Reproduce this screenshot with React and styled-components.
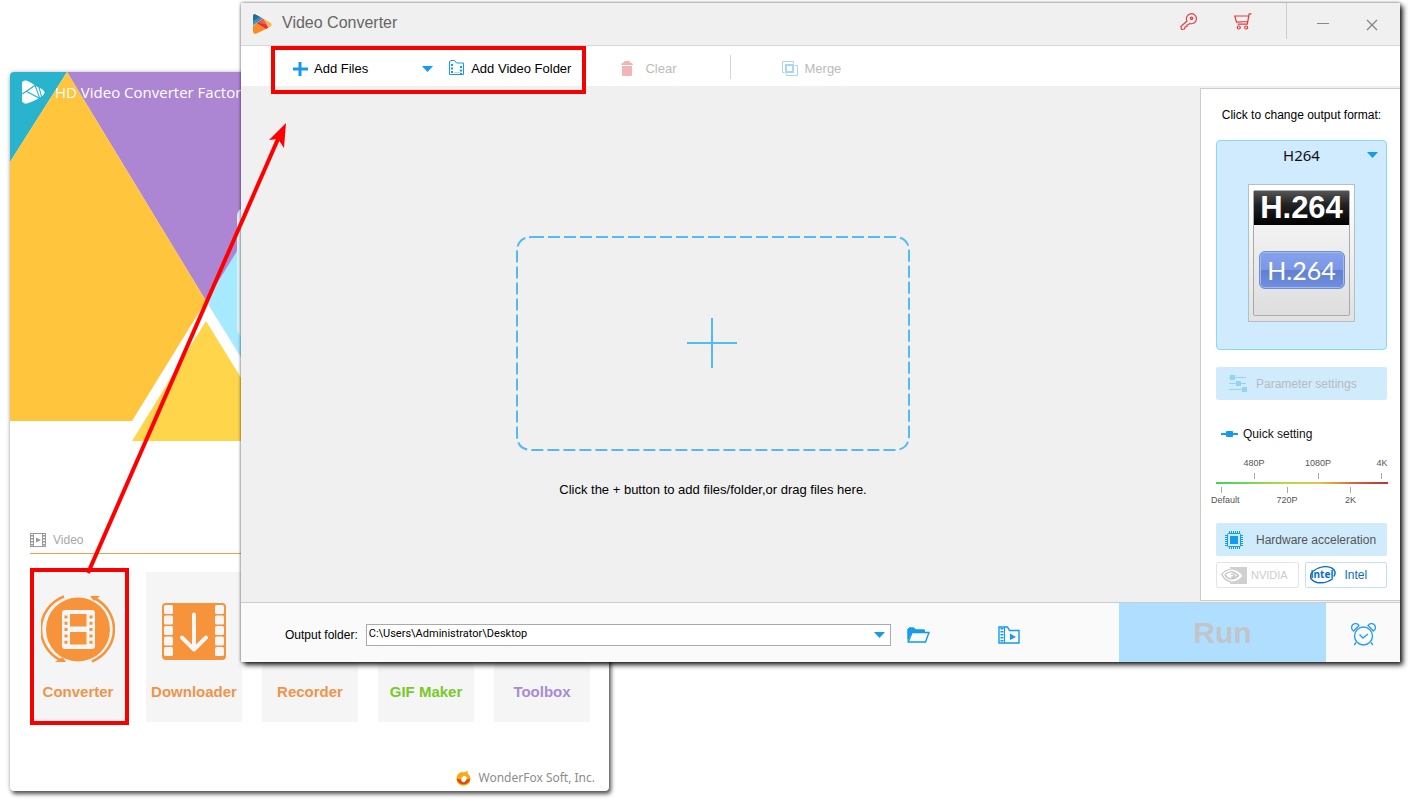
import React, { useState } from "react";
import styled, { createGlobalStyle } from "styled-components";

const GlobalStyle = createGlobalStyle`
  * {
    box-sizing: border-box;
  }

  body {
    margin: 0;
    background: #fff;
    font-family: "Liberation Sans", Arial, sans-serif;
    font-size: 13px;
    color: #111;
  }

  button {
    font-family: inherit;
    border: none;
    background: none;
    padding: 0;
    cursor: pointer;
  }

  svg {
    display: block;
    flex-shrink: 0;
  }
`;

const Desktop = styled.main`
  position: relative;
  min-height: 100vh;
  overflow: hidden;
`;

/* ---------- launcher window ---------- */

const LauncherWindow = styled.section`
  position: absolute;
  left: 10px;
  top: 72px;
  display: flex;
  flex-direction: column;
  width: 599px;
  background: #fff;
  border-radius: 4px;
  box-shadow: 2px 3px 4px rgba(0, 0, 0, 0.65), 0 0 5px rgba(0, 0, 0, 0.2);
`;

const Hero = styled.header`
  position: relative;
  height: 369px;
  overflow: hidden;
  border-radius: 4px 4px 0 0;
`;

const HeroArt = styled.svg`
  position: absolute;
  left: 0;
  top: 0;
`;

const Brand = styled.div`
  position: relative;
  display: flex;
  align-items: center;
  gap: 10px;
  padding: 8px 12px;
  color: #fff;
  font-family: "Open Sans", sans-serif;
  font-size: 15px;
  line-height: 24px;
`;

const LauncherBody = styled.div`
  display: flex;
  flex-direction: column;
  padding: 89px 20px 0;
`;

const SectionTitle = styled.h2`
  display: flex;
  align-items: center;
  gap: 7px;
  margin: 0 0 18px;
  padding-bottom: 3px;
  border-bottom: 1px solid #f0a040;
  color: #a8a8a8;
  font-size: 12px;
  font-weight: normal;
  line-height: 20px;
`;

const Tiles = styled.div`
  display: grid;
  grid-template-columns: repeat(5, 96px);
  gap: 20px;
`;

const Tile = styled.button`
  display: flex;
  flex-direction: column;
  align-items: center;
  justify-content: space-between;
  height: 150px;
  padding: 23px 0 20px;
  background: #f5f5f5;
  color: ${(props) => props.$color};
  font-size: 15px;
  font-weight: bold;
  line-height: 20px;
`;

const LauncherFooter = styled.footer`
  display: flex;
  align-items: center;
  justify-content: flex-end;
  gap: 7px;
  padding: 46px 14px 3px;
  color: #8c8c8c;
  font-family: "Noto Sans", sans-serif;
  font-size: 12px;
  line-height: 20px;
`;

/* ---------- converter window ---------- */

const ConverterWindow = styled.section`
  position: absolute;
  left: 241px;
  right: 28px;
  top: 3px;
  display: flex;
  flex-direction: column;
  background: #f0f0f0;
  box-shadow: 3px 3px 5px rgba(0, 0, 0, 0.85), 0 0 3px rgba(0, 0, 0, 0.55);
`;

const TitleBar = styled.header`
  display: flex;
  align-items: center;
  height: 43px;
  padding-left: 11px;
  border-bottom: 1px solid #d8d8d8;
`;

const Title = styled.h1`
  flex: 1;
  margin: 0 0 2px 10px;
  color: #666;
  font-size: 16px;
  font-weight: normal;
  line-height: 20px;
`;

const TitleActions = styled.div`
  display: flex;
  align-items: center;
  align-self: stretch;
  padding: 0 22px 6px 0;
`;

const TitleButton = styled.button`
  margin-left: ${(props) => props.$before || 0}px;
`;

const CloseButton = styled(TitleButton)`
  padding-top: 8px;
`;

const TitleDivider = styled.span`
  align-self: stretch;
  width: 1px;
  margin: 0 30px 0 34px;
  background: #ccc;
`;

const Toolbar = styled.div`
  display: flex;
  align-items: center;
  height: 40px;
  padding: 5px 0 0 51px;
  background: #fff;
`;

const ToolButton = styled.button`
  display: flex;
  align-items: center;
  gap: ${(props) => props.$gap || 6}px;
  margin-left: ${(props) => props.$before || 0}px;
  color: #000;
  font-size: 13px;
  line-height: 20px;

  &:disabled {
    color: #bbb;
    cursor: default;
  }
`;

const ToolDivider = styled.span`
  width: 1px;
  height: 24px;
  margin: 0 0 4px 53px;
  background: #d4d4d4;
`;

const Workspace = styled.div`
  display: flex;
  min-height: 516px;
`;

const DropArea = styled.div`
  flex: 1;
  display: flex;
  flex-direction: column;
  align-items: center;
  gap: 29px;
  padding: 149px 15px 0 0;
`;

const DropZone = styled.button`
  display: flex;
`;

const DropHint = styled.p`
  margin: 0;
  color: #000;
  font-size: 13px;
  line-height: 20px;
`;

const Sidebar = styled.aside`
  display: flex;
  flex-direction: column;
  width: 200px;
  margin: 2px 0 1px;
  padding: 16px 13px 0 15px;
  background: #fff;
  border: 1px solid #ccc;
  border-right: none;
`;

const SideLabel = styled.p`
  margin: 0 0 15px;
  text-align: center;
  white-space: nowrap;
  font-size: 12px;
  line-height: 20px;
  color: #000;
`;

const FormatButton = styled.button`
  display: flex;
  flex-direction: column;
  align-items: center;
  gap: 18px;
  height: 210px;
  padding: 3px 8px;
  background: #d0ebfe;
  border: 1px solid #86dcec;
  border-radius: 4px;
`;

const FormatName = styled.span`
  display: grid;
  grid-template-columns: 11px 1fr 11px;
  align-items: center;
  width: 100%;
  color: #111;
  font-family: "Noto Sans", sans-serif;
  font-size: 15px;
  line-height: 22px;

  span {
    grid-column: 2;
  }
`;

const FormatCard = styled.span`
  display: flex;
  width: 107px;
  height: 138px;
  padding: 5px 4px;
  border: 1px solid #b8bcc4;
  background: linear-gradient(#fff, #e2e2e2);
`;

const FormatSheet = styled.span`
  flex: 1;
  display: flex;
  flex-direction: column;
  align-items: center;
  gap: 26px;
  border: 1px solid #aaa;
  border-radius: 2px;
  background: linear-gradient(#fafafa, #dedede);
`;

const FormatBanner = styled.span`
  align-self: stretch;
  height: 34px;
  background: linear-gradient(#555, #222 40%, #000);
  color: #fff;
  text-align: center;
  font-size: 31px;
  font-weight: bold;
  line-height: 34px;
`;

const FormatBadge = styled.span`
  width: 86px;
  height: 38px;
  border: 1px solid #6d8fd8;
  border-radius: 6px;
  background: linear-gradient(#86a2ea, #7a97e6 50%, #6280cf 51%, #6f8fdf);
  box-shadow: inset 0 0 0 1px #a3b9f2;
  color: #fff;
  text-align: center;
  font-family: Lato, sans-serif;
  font-size: 25px;
  line-height: 37px;
`;

const WideButton = styled.button`
  display: flex;
  align-items: center;
  gap: ${(props) => props.$gap}px;
  height: 33px;
  margin-top: ${(props) => props.$before}px;
  padding: 0 ${(props) => props.$inset}px;
  background: #d0ebfc;
  border-radius: 2px;
  color: #555;
  font-size: 12px;
  white-space: nowrap;

  &:disabled {
    color: #b4bcc2;
    cursor: default;
  }
`;

const QuickLabel = styled.label`
  display: flex;
  align-items: center;
  gap: 5px;
  margin: 24px 0 13px 5px;
  color: #111;
  font-size: 12px;
  line-height: 20px;
`;

const Scale = styled.div`
  margin: 0 -11px 0 -10px;
`;

const ScaleRow = styled.div`
  display: grid;
  grid-template-columns: repeat(6, 1fr);
  justify-items: center;
  color: #555;
  font-size: 9px;
  line-height: 12px;
  white-space: nowrap;
`;

const ScaleMark = styled.span`
  display: flex;
  flex-direction: column;
  grid-column: ${(props) => props.$column};
  align-items: center;
  gap: 4px;

  &::after {
    content: "";
    width: 1px;
    height: 6px;
    background: #aaa;
  }
`;

const ScaleMarkBelow = styled(ScaleMark)`
  flex-direction: column-reverse;
  gap: 1px;
`;

const ScaleStart = styled(ScaleMarkBelow)`
  align-items: flex-start;
  padding-left: 5px;

  &::after {
    margin-left: 10px;
  }
`;

const QualityRange = styled.input`
  appearance: none;
  display: block;
  width: 172px;
  height: 2px;
  margin: 3px 10px;
  background: linear-gradient(90deg, #3fd45c, #b5d84e 40%, #e5c444 60%, #d4533c 85%, #b8362c);

  &::-webkit-slider-thumb {
    appearance: none;
    width: 10px;
    height: 10px;
    background: transparent;
  }
`;

const Vendors = styled.div`
  display: grid;
  grid-template-columns: 1fr 1fr;
  gap: 6px;
  margin-top: 6px;
`;

const VendorButton = styled.button`
  display: flex;
  align-items: center;
  gap: ${(props) => props.$gap}px;
  height: 26px;
  padding: 0 4px;
  background: #fff;
  border: 1px solid #bfe0f8;
  border-radius: 2px;
  color: #0a6fc2;
  font-size: 12px;

  &:disabled {
    border-color: #e4e4e4;
    color: #ccc;
    font-size: 11px;
    cursor: default;
  }
`;

const Footer = styled.footer`
  display: flex;
  align-items: center;
  height: 60px;
  background: #fafafa;
  border-top: 1px solid #ccc;
`;

const FooterLabel = styled.label`
  margin: 4px 8px 0 44px;
  color: #000;
  font-size: 12px;
  line-height: 20px;
  white-space: nowrap;
`;

const FolderPicker = styled.div`
  flex: 0 1 525px;
  display: flex;
  align-items: center;
  height: 22px;
  margin-top: 5px;
  padding-right: 5px;
  background: #fff;
  border: 1px solid #aaa;
`;

const FolderInput = styled.input`
  flex: 1;
  min-width: 0;
  height: 20px;
  padding: 0 2px 3px;
  border: none;
  outline: none;
  background: transparent;
  color: #000;
  font-family: Roboto, sans-serif;
  font-size: 11px;
`;

const FooterTools = styled.div`
  flex: 1;
  display: flex;
  gap: 68px;
  padding: 5px 0 0 16px;
`;

const RunButton = styled.button`
  width: 207px;
  height: 100%;
  background: #b0deff;
  color: #bfc5ca;
  font-size: 30px;
  font-weight: bold;
`;

const AlarmButton = styled.button`
  display: flex;
  justify-content: center;
  width: 74px;
  padding-top: 3px;
`;

/* ---------- callouts drawn over both windows ---------- */

const Highlight = styled.div`
  position: absolute;
  left: ${(props) => props.$x}px;
  top: ${(props) => props.$y}px;
  width: ${(props) => props.$w}px;
  height: ${(props) => props.$h}px;
  border: 4px solid #f60000;
  pointer-events: none;
`;

const Arrow = styled.svg`
  position: absolute;
  left: 80px;
  top: 115px;
  pointer-events: none;
`;

/* ---------- icons ---------- */

const BLUE = "#129bef";

const CaretIcon = () => (
  <svg width="11" height="6" viewBox="0 0 11 6">
    <path d="M0 0h11L5.500 6z" fill={BLUE} />
  </svg>
);

const BrandIcon = () => (
  <svg width="23" height="24" viewBox="0 0 23 24">
    <path d="M0 3.500Q0 .5 3.500 .5Q6 .5 12.500 5L0 13.500Z" fill="#fff" />
    <path d="M0 14.800L4.500 12l12 6.500Q5 24.500 3 23.500Q0 23 0 20Z" fill="#fff" />
    <path d="M5.500 11.200L12.800 6.200l4 11Z" fill="#fff" />
    <path d="M14 6.300Q15.500 6.500 16.500 7.500L19 16.800L18 17.500Z" fill="#fff" />
    <path d="M17.800 8Q22.500 10 22.500 12.500Q22.500 14.500 20 16.200Z" fill="#fff" />
  </svg>
);

const AppIcon = () => (
  <svg width="20" height="20" viewBox="0 0 20 20">
    <path d="M1 2Q1 0 3 .3L11 4.500L1 11.500Z" fill="#2f94c6" />
    <path d="M1 2Q1 0 3 .3L8 3L1 7Z" fill="#35688c" />
    <path d="M1 12L4.500 9.300l9.500 5.700L4 19.800Q1 20 1 17Z" fill="#fb8b24" />
    <path d="M4.500 9.200L11.300 4.700l5.200 9L14 15Z" fill="#e5352b" />
    <path d="M11.500 4.700l6.500 3.800Q21 10.500 18.500 12.500L16.500 13.700Z" fill="#f7b45c" />
    <path d="M11.300 5l3.500 5.500L7 9z" fill="#f2604a" />
  </svg>
);

const FilmIcon = () => (
  <svg width="16" height="14" viewBox="0 0 16 14" fill="none" stroke="#9a9a9a">
    <rect x=".5" y=".5" width="15" height="13" />
    <path d="M3.500 1v12M12.500 1v12" />
    <path d="M2 2v11M14 2v11" strokeWidth="2" strokeDasharray="1.500 1.500" />
    <path d="M6 4.500l5 2.500-5 2.500z" fill="#9a9a9a" stroke="none" />
  </svg>
);

const ConverterIcon = () => (
  <svg width="74" height="68" viewBox="0 0 74 68">
    <circle cx="37" cy="34.500" r="32" fill="#f7933a" />
    <g fill="none" stroke="#f7933a" strokeWidth="2.500">
      <path d="M23 1.500A36 35 0 0 0 20 65.500" />
      <path d="M52 2.500A36 35 0 0 1 51 66.500" />
    </g>
    <path d="M14 67h11l-3.500-5zM59 1H49l4 5z" fill="#f7933a" />
    <rect x="21" y="15" width="33" height="39" rx="3" fill="#f6f6f6" />
    <path d="M29 19h16.500v12.500H29zM29 37h16.500v12.500H29z" fill="#f7933a" />
    <path d="M25 20.500v30M50 20.500v30" stroke="#f7933a" strokeWidth="3" strokeDasharray="3 3.300" />
  </svg>
);

const DownloaderIcon = () => (
  <svg width="64" height="68" viewBox="0 0 64 68">
    <rect x="0" y="8" width="64" height="57" rx="4" fill="#f7933a" />
    {[10, 20.500, 31, 41.500, 52].map((y) => (
      <g key={y} fill="#f6f6f6">
        <rect x="2" y={y} width="9" height="9" rx="1.500" />
        <rect x="53" y={y} width="9" height="9" rx="1.500" />
      </g>
    ))}
    <path
      d="M32 19.500v34M20 42.500l12 12 12-12"
      fill="none"
      stroke="#f6f6f6"
      strokeWidth="4"
      strokeLinecap="round"
      strokeLinejoin="round"
    />
  </svg>
);

const FoxIcon = () => (
  <svg width="15" height="16" viewBox="0 0 15 16">
    <path d="M6 2Q10 3 11.500 .5Q12 2 11.500 3.500Q14.500 5 14.500 9A7 6.800 0 0 1 .5 9Q.5 3 6 2Z" fill="#f9ab16" />
    <path d="M.6 8.500A7 7 0 0 0 14.400 8.500Q12 10 7.500 9.500Q3 9.500 .6 8.500Z" fill="#df4a12" />
    <ellipse cx="8" cy="9" rx="2.400" ry="3.200" transform="rotate(30 8 9)" fill="#fff" />
  </svg>
);

const PlusIcon = () => (
  <svg width="16" height="16" viewBox="0 0 16 16">
    <path d="M8 1v14M1 8h15" stroke={BLUE} strokeWidth="3" />
  </svg>
);

const FilmFolderIcon = () => (
  <svg width="16" height="17" viewBox="0 0 16 17" fill="none" stroke={BLUE}>
    <path d="M.5 14.500V1.500L2 .5h3.500l2 2.500H14.500V14.500z" />
    <path d="M3 4v10M12 6v8" strokeWidth="2" strokeDasharray="2 1.500" />
    <path d="M5 12.500h6" stroke="#a8dcf8" />
  </svg>
);

const TrashIcon = () => (
  <svg width="12" height="15" viewBox="0 0 12 15" fill="#f3b4b4">
    <path d="M4 0h4l1.500 1.500Q12 2 12 4H0Q0 2 2.500 1.500zM1 5h10v9q0 1-1 1H2q-1 0-1-1z" />
  </svg>
);

const MergeIcon = () => (
  <svg width="16" height="16" viewBox="0 0 16 16" fill="none" stroke="#a9d6f2">
    <path d="M11.500 2.500V.5H.5v11H2.500M12.500 4.500h3v10h-11v-2" />
    <rect x="4" y="4" width="7" height="7" strokeWidth="2" />
  </svg>
);

const KeyIcon = () => (
  <svg width="17" height="17" viewBox="0 0 17 17" fill="none" stroke="#e04444" strokeWidth="1.200">
    <path d="M7 8A5 5 0 1 1 10 10.500L8.500 11.500L7 12v1.500l-2 .5-.5 2-3 .4-.6-2.900Z" />
    <circle cx="11.500" cy="5.200" r="1.200" fill="#e88" />
  </svg>
);

const CartIcon = () => (
  <svg width="18" height="17" viewBox="0 0 18 17" fill="none" stroke="#e03c3c" strokeWidth="1.200">
    <path d="M17.500 .8H15.200L13.300 11.200H3.500M14.800 3H.8L2.500 9.200L13.500 8.500" />
    <circle cx="4.800" cy="14.500" r="1.500" />
    <circle cx="12.200" cy="14.500" r="1.500" />
  </svg>
);

const DropFrame = () => (
  <svg width="394" height="216" viewBox="0 0 394 216" fill="none" stroke="#55b9f3" strokeWidth="2">
    <path
      d="M16 2H378Q393 2 393 17V200Q393 215 378 215H16Q1 215 1 200V17Q1 2 16 2"
      strokeDasharray="12 4"
    />
    <path d="M196 83v50M171 108h50" />
  </svg>
);

const SlidersIcon = () => (
  <svg width="18" height="17" viewBox="0 0 18 17" fill="#93d3f7">
    <path d="M0 2h17v1H0zM0 8h17v1H0zM0 14h17v1H0z" />
    <path d="M1 0h5v5H1zM7 6h5v5H7zM13 12h5v5h-5z" />
  </svg>
);

const KnobIcon = () => (
  <svg width="17" height="6" viewBox="0 0 17 6">
    <path d="M0 3h17" stroke={BLUE} strokeWidth="2" />
    <rect x="5" width="7" height="6" rx="1" fill={BLUE} />
  </svg>
);

const ChipIcon = () => (
  <svg width="18" height="18" viewBox="0 0 18 18" fill="none" stroke={BLUE}>
    <rect x="2.500" y="2.500" width="13" height="13" rx="1" />
    <path d="M4 1.500h11M4 16.500h11" strokeWidth="3" strokeDasharray="1 1" />
    <path d="M1.500 4v11M16.500 4v11" strokeWidth="3" strokeDasharray="1 1" />
    <rect x="5" y="5" width="8" height="8" fill={BLUE} stroke="none" />
  </svg>
);

const NvidiaIcon = () => (
  <svg width="26" height="17" viewBox="0 0 26 17">
    <path d="M9 0h17v17H9v-2.500q9 0 12.500-6Q16 2 9 2.500z" fill="#d0d0d0" />
    <path
      d="M9 2.500Q4 3 .8 7.500Q4 14 10 14.500M9 5Q5.500 5.500 4 8Q6 11.500 10 12Q15 11.500 17.500 8.500Q13 4 9 5M10 7.500q3-.5 4 1.200q-2 1.800-4 1.300"
      fill="none"
      stroke="#c0c0c0"
      strokeWidth="1.200"
    />
  </svg>
);

const IntelMark = styled.svg`
  font-family: "Noto Sans", sans-serif;
  font-size: 10px;
  font-weight: bold;
`;

const IntelIcon = () => (
  <IntelMark width="26" height="18" viewBox="0 0 26 18">
    <path
      d="M4 4.500Q13-1.500 21.500 1.800Q27 5 24 10.500M23 12.500Q16 18 7 16.500Q-1 14 .8 8.500Q1.500 6 4 4.500"
      fill="none"
      stroke="#0a6fc2"
      strokeWidth="1.400"
    />
    <text x="12" y="12" textAnchor="middle" fill="#0a6fc2">
      intel
    </text>
  </IntelMark>
);

const OpenFolderIcon = () => (
  <svg width="23" height="16" viewBox="0 0 23 16" fill="none" stroke={BLUE}>
    <path d="M1 14V2L2.500 1H7l1.500 2H17.500V5" />
    <path d="M1 5V2L2.500 1H6.500l2 2H17V4.500H6L4.500 5L1 12z" fill={BLUE} />
    <path d="M5 5.500H22L18.500 15H1.200Z" strokeWidth="1.400" fill="#fafafa" />
  </svg>
);

const MediaFolderIcon = () => (
  <svg width="22" height="18" viewBox="0 0 22 18" fill="none" stroke={BLUE} strokeWidth="1.400">
    <path d="M1 17V1H9.500L11.500 4.500H21V17z" />
    <path d="M4 2v14" strokeWidth="3" strokeDasharray="1.500 1.500" />
    <path d="M6.500 1v16" strokeWidth="1" />
    <path d="M12 7.500l6 3.500-6 3z" fill={BLUE} stroke="none" />
  </svg>
);

const AlarmIcon = () => (
  <svg width="25" height="23" viewBox="0 0 25 23" fill="none" stroke="#2a9df0" strokeWidth="1.400">
    <circle cx="12.500" cy="13" r="9" />
    <path d="M8.500 11.500l3.500 3.500 5-4M5 19.500l-1.800 2.500M20 19.500l1.800 2.500" />
    <path d="M2.500 8A4 4 0 1 1 8 2.500ZM22.500 8A4 4 0 1 0 17 2.500Z" />
  </svg>
);

const tiles = [
  { name: "Converter", color: "#f0944c", icon: <ConverterIcon /> },
  { name: "Downloader", color: "#f0944c", icon: <DownloaderIcon /> },
  { name: "Recorder", color: "#f0944c", icon: <i /> },
  { name: "GIF Maker", color: "#7bc82c", icon: <i /> },
  { name: "Toolbox", color: "#a98bd4", icon: <i /> },
];

const Launcher = () => (
  <LauncherWindow>
    <Hero>
      <HeroArt width="599" height="369" viewBox="0 0 599 369">
        <path d="M57 0H599V229H196Z" fill="#ad86d3" />
        <path d="M0 0H57L0 90Z" fill="#29b3cc" />
        <path d="M57 0L196 229L122 349H0V90Z" fill="#ffc53c" />
        <path d="M196 228H599V369H284Z" fill="#fff" />
        <path d="M196 229L260 126V332Z" fill="#a5eaff" />
        <path d="M196 249L270 369H122Z" fill="#ffd54c" />
        <rect x="227" y="136" width="60" height="129" rx="8" fill="#dff3fb" />
      </HeroArt>
      <Brand>
        <BrandIcon />
        HD Video Converter Factory
      </Brand>
    </Hero>
    <LauncherBody>
      <SectionTitle>
        <FilmIcon />
        Video
      </SectionTitle>
      <Tiles>
        {tiles.map((tile) => (
          <Tile key={tile.name} $color={tile.color}>
            {tile.icon}
            {tile.name}
          </Tile>
        ))}
      </Tiles>
    </LauncherBody>
    <LauncherFooter>
      <FoxIcon />
      WonderFox Soft, Inc.
    </LauncherFooter>
  </LauncherWindow>
);

const QuickSetting = () => {
  const [quality, setQuality] = useState(0);

  return (
    <>
      <QuickLabel htmlFor="quality">
        <KnobIcon />
        Quick setting
      </QuickLabel>
      <Scale>
        <ScaleRow>
          <ScaleMark $column={2}>480P</ScaleMark>
          <ScaleMark $column={4}>1080P</ScaleMark>
          <ScaleMark $column={6}>4K</ScaleMark>
        </ScaleRow>
        <QualityRange
          id="quality"
          type="range"
          min="0"
          max="5"
          value={quality}
          onChange={(e) => setQuality(Number(e.target.value))}
        />
        <ScaleRow>
          <ScaleStart $column={1}>Default</ScaleStart>
          <ScaleMarkBelow $column={3}>720P</ScaleMarkBelow>
          <ScaleMarkBelow $column={5}>2K</ScaleMarkBelow>
        </ScaleRow>
      </Scale>
    </>
  );
};

const Converter = () => {
  const [folder, setFolder] = useState("C:\\Users\\Administrator\\Desktop");

  return (
    <ConverterWindow>
      <TitleBar>
        <AppIcon />
        <Title>Video Converter</Title>
        <TitleActions>
          <TitleButton aria-label="Register">
            <KeyIcon />
          </TitleButton>
          <TitleButton $before={37} aria-label="Buy">
            <CartIcon />
          </TitleButton>
          <TitleDivider />
          <TitleButton aria-label="Minimize">
            <svg width="12" height="12" viewBox="0 0 12 12" stroke="#888">
              <path d="M0 8.500h12" />
            </svg>
          </TitleButton>
          <CloseButton $before={37} aria-label="Close">
            <svg width="12" height="12" viewBox="0 0 12 12" stroke="#888" strokeWidth="1.400">
              <path d="M1 1l10 10M11 1L1 11" />
            </svg>
          </CloseButton>
        </TitleActions>
      </TitleBar>
      <Toolbar>
        <ToolButton>
          <PlusIcon />
          Add Files
        </ToolButton>
        <ToolButton $before={54} aria-label="More ways to add">
          <CaretIcon />
        </ToolButton>
        <ToolButton $before={16}>
          <FilmFolderIcon />
          Add Video Folder
        </ToolButton>
        <ToolButton $before={50} $gap={12} disabled>
          <TrashIcon />
          Clear
        </ToolButton>
        <ToolDivider />
        <ToolButton $before={51} $gap={7} disabled>
          <MergeIcon />
          Merge
        </ToolButton>
      </Toolbar>
      <Workspace>
        <DropArea>
          <DropZone aria-label="Add files">
            <DropFrame />
          </DropZone>
          <DropHint>Click the + button to add files/folder,or drag files here.</DropHint>
        </DropArea>
        <Sidebar>
          <SideLabel>Click to change output format:</SideLabel>
          <FormatButton>
            <FormatName>
              <span>H264</span>
              <CaretIcon />
            </FormatName>
            <FormatCard>
              <FormatSheet>
                <FormatBanner>H.264</FormatBanner>
                <FormatBadge>H.264</FormatBadge>
              </FormatSheet>
            </FormatCard>
          </FormatButton>
          <WideButton $before={17} $inset={13} $gap={9} disabled>
            <SlidersIcon />
            Parameter settings
          </WideButton>
          <QuickSetting />
          <WideButton $before={17} $inset={9} $gap={13}>
            <ChipIcon />
            Hardware acceleration
          </WideButton>
          <Vendors>
            <VendorButton $gap={4} disabled>
              <NvidiaIcon />
              NVIDIA
            </VendorButton>
            <VendorButton $gap={9}>
              <IntelIcon />
              Intel
            </VendorButton>
          </Vendors>
        </Sidebar>
      </Workspace>
      <Footer>
        <FooterLabel htmlFor="output-folder">Output folder:</FooterLabel>
        <FolderPicker>
          <FolderInput id="output-folder" value={folder} onChange={(e) => setFolder(e.target.value)} />
          <button aria-label="Recent folders">
            <CaretIcon />
          </button>
        </FolderPicker>
        <FooterTools>
          <button aria-label="Choose folder">
            <OpenFolderIcon />
          </button>
          <button aria-label="Open output folder">
            <MediaFolderIcon />
          </button>
        </FooterTools>
        <RunButton disabled>Run</RunButton>
        <AlarmButton aria-label="Schedule">
          <AlarmIcon />
        </AlarmButton>
      </Footer>
    </ConverterWindow>
  );
};

const App = () => (
  <>
    <GlobalStyle />
    <Desktop>
      <Launcher />
      <Converter />
      <Highlight $x={271} $y={46} $w={315} $h={48} />
      <Highlight $x={30} $y={568} $w={99} $h={157} />
      <Arrow width="216" height="464" viewBox="0 0 216 464">
        <path d="M8 458L198 24" stroke="#f00" strokeWidth="4" />
        <path d="M206 8L189 25L198 24L204 33Z" fill="#f00" />
      </Arrow>
    </Desktop>
  </>
);

export default App;
